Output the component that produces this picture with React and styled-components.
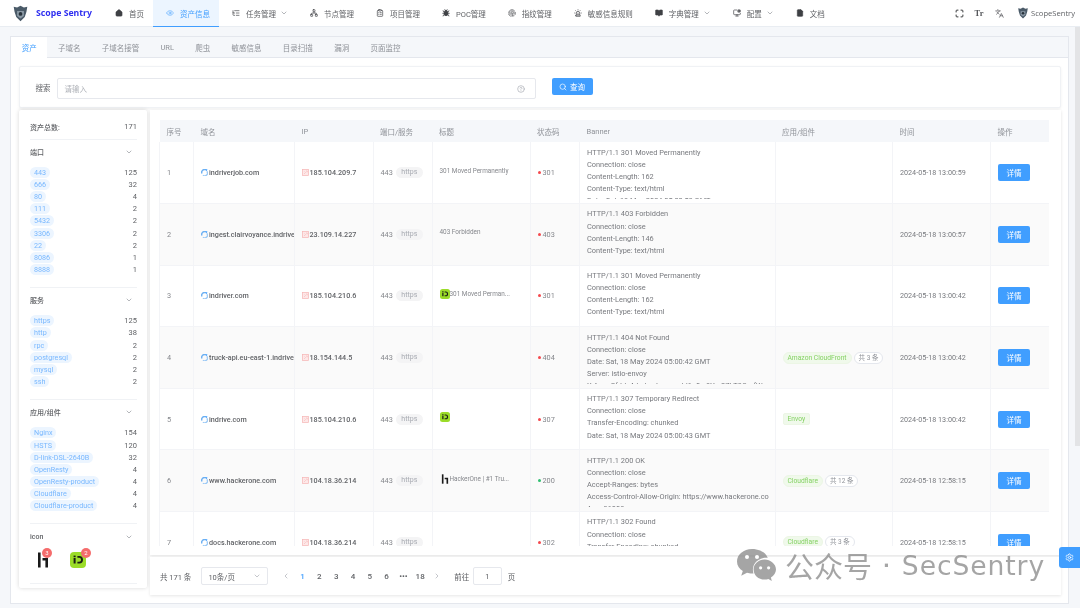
import React from "react";
import styled, { createGlobalStyle } from "styled-components";
import {
  Eye,
  ListTree,
  Network,
  ClipboardList,
  Bug,
  Fingerprint,
  Siren,
  BookOpen,
  MonitorCog,
  FileText,
  Maximize,
  Languages,
  ChevronDown,
  ChevronLeft,
  ChevronRight,
  Search,
  CircleHelp,
  Settings,
  Home,
} from "lucide-react";

const GlobalStyle = createGlobalStyle`
  html, body {
    margin: 0;
    padding: 0;
    height: 100%;
    overflow: hidden;
    background: #f5f7fa;
  }
  * {
    box-sizing: border-box;
  }
  #root {
    filter: blur(0.35px);
  }
`;

const FONT = `Roboto, "Noto Sans CJK SC", sans-serif`;

const Page = styled.div`
  position: relative;
  width: 1080px;
  height: 608px;
  overflow: hidden;
  font-family: ${FONT};
  font-size: 7.5px;
  color: #606266;
  background: #f5f7fa;
`;

const Header = styled.header`
  display: flex;
  align-items: stretch;
  height: 27px;
  background: #fff;
  border-bottom: 1px solid #e9edf2;
`;

const Brand = styled.div`
  display: flex;
  align-items: center;
  gap: 7px;
  width: 102px;
  padding-left: 12px;
  font-family: "Noto Sans", sans-serif;
  font-size: 8.7px;
  font-weight: 700;
  color: #2f2ff0;
  white-space: nowrap;
`;

const NavItem = styled.div`
  display: flex;
  align-items: center;
  height: 27px;
  padding: 0 9px 0 12px;
  gap: 5px;
  white-space: nowrap;
  color: ${(p) => (p.$active ? "#409eff" : "#606266")};
  background: ${(p) => (p.$active ? "#ecf5ff" : "transparent")};
  border-bottom: 1px solid ${(p) => (p.$active ? "#409eff" : "transparent")};
  svg.nav-icon {
    width: 10px;
    height: 10px;
    padding: 1px;
    color: ${(p) => (p.$active ? "#409eff" : "#3f4145")};
  }
  svg.chev {
    width: 8px;
    height: 8px;
    margin: 0 0 0 -1px;
    color: #909399;
  }
`;

const HeaderRight = styled.div`
  margin-left: auto;
  display: flex;
  align-items: center;
  padding-right: 5px;
  color: #303133;
  svg {
    display: block;
  }
`;

const ToolIcon = styled.span`
  display: flex;
  align-items: center;
  justify-content: center;
  width: 20px;
  margin-right: ${(p) => p.$mr || 0}px;
  font-family: "Liberation Serif", serif;
  font-size: 8.5px;
  font-weight: 700;
  color: #55575b;
`;

const UserName = styled.span`
  margin-left: 2px;
  font-family: "Open Sans", sans-serif;
  font-size: 7.6px;
  color: #606266;
`;

const Shell = styled.main`
  margin: 9px 11px 0 10px;
  height: 568px;
  background: #fff;
  border: 1px solid #e4e7ed;
`;

const TabBar = styled.div`
  display: flex;
  height: 21px;
  background: #f5f7fa;
  border-bottom: 1px solid #e4e7ed;
`;

const Tab = styled.div`
  display: flex;
  align-items: center;
  height: 21px;
  padding: 0 10.65px;
  color: ${(p) => (p.$active ? "#409eff" : "#909399")};
  background: ${(p) => (p.$active ? "#fff" : "transparent")};
`;

const Body = styled.div`
  padding: 8px 7px 0 8px;
`;

const SearchCard = styled.div`
  display: flex;
  align-items: flex-start;
  height: 42px;
  padding: 11px 0 0 15.5px;
  background: #fff;
  border: 1px solid #f0f2f5;
  border-radius: 2px;
  box-shadow: 0 1px 3px rgba(0, 0, 0, 0.06);
`;

const SearchLabel = styled.span`
  width: 21px;
  line-height: 21px;
  font-size: 7.5px;
`;

const SearchInput = styled.div`
  display: flex;
  align-items: center;
  justify-content: space-between;
  width: 479px;
  height: 21px;
  padding: 0 10px 0 7px;
  color: #b0b3b9;
  border: 1px solid #e6e8ed;
  border-radius: 2px;
  svg {
    width: 8px;
    height: 8px;
    color: #a8abb2;
  }
`;

const QueryButton = styled.div`
  display: flex;
  align-items: center;
  justify-content: center;
  gap: 3px;
  width: 41px;
  height: 17px;
  margin-left: 16px;
  color: #fff;
  background: #409eff;
  border-radius: 2px;
  svg {
    width: 8px;
    height: 8px;
  }
`;

const Columns = styled.div`
  display: flex;
  gap: 3px;
  margin-top: 2px;
`;

const Sidebar = styled.aside`
  width: 128px;
  height: 478px;
  padding: 0 10px 0 11px;
  background: #fff;
  box-shadow: 0 0 4px rgba(0, 0, 0, 0.16);
  border-radius: 2px;
`;

const SummaryRow = styled.div`
  display: flex;
  justify-content: space-between;
  align-items: center;
  height: 29.5px;
  padding-top: 5px;
  font-size: 7px;
  font-weight: 500;
  border-bottom: 1px solid #f0f2f5;
  b {
    font-weight: 400;
    font-size: 7.5px;
  }
`;

const FacetGroup = styled.section`
  padding-bottom: ${(p) => p.$pb ?? 11.5}px;
  border-bottom: 1px solid #f0f2f5;
`;

const FacetTitle = styled.div`
  display: flex;
  align-items: center;
  justify-content: space-between;
  height: 25px;
  margin-bottom: 2px;
  font-size: 7px;
  font-weight: 500;
  svg {
    width: 8px;
    height: 8px;
    margin-right: 4px;
    color: #909399;
  }
`;

const FacetRow = styled.div`
  display: flex;
  align-items: center;
  justify-content: space-between;
  height: 12.1px;
  font-size: 7.5px;
`;

const FacetTag = styled.span`
  display: inline-block;
  height: 11px;
  line-height: 11px;
  padding: 0 4px;
  font-size: 7.2px;
  color: #79b8ff;
  background: #ecf5ff;
  border-radius: 6px;
`;

const LogoRow = styled.div`
  display: flex;
  gap: 23px;
  height: 32px;
  padding: 1px 0 0 5px;
`;

const LogoWrap = styled.div`
  position: relative;
  width: ${(p) => p.$w}px;
  height: 16px;
`;

const Badge = styled.span`
  position: absolute;
  top: -4px;
  right: -5px;
  width: 10px;
  height: 10px;
  line-height: 10px;
  text-align: center;
  font-size: 6px;
  color: #fff;
  background: #f56c6c;
  border-radius: 50%;
`;

const MainColumn = styled.div`
  width: 911px;
`;

const TableCard = styled.div`
  height: 445px;
  padding: 10px 11px 9px 9px;
  background: #fff;
  box-shadow: 0 1px 3px rgba(0, 0, 0, 0.12);
`;

const TableClip = styled.div`
  height: 426px;
  overflow: hidden;
`;

const Table = styled.table`
  width: 890px;
  table-layout: fixed;
  border-collapse: collapse;
`;

const Th = styled.th`
  height: 22px;
  padding: 0 0 0 7px;
  text-align: left;
  font-size: 7.5px;
  font-weight: 400;
  color: #909399;
  background: #f5f7fa;
`;

const Row = styled.tr`
  height: 61.6px;
  background: ${(p) => (p.$striped ? "#fafafa" : "#fff")};
`;

const Td = styled.td`
  padding: 0 0 0 7px;
  border-right: 1px solid #f3f4f7;
  border-bottom: 1px solid #f3f4f7;
  overflow: hidden;
  white-space: nowrap;
  font-size: ${(p) => p.$size || 7.3}px;
  color: ${(p) => p.$color || "#85878c"};
  &:first-child {
    border-left: 1px solid #f3f4f7;
  }
  &:last-child {
    border-right: 0;
  }
`;

const Inline = styled.div`
  display: flex;
  align-items: center;
  gap: ${(p) => p.$gap || 0}px;
  white-space: nowrap;
  transform: translateY(${(p) => p.$up || 0}px);
`;

const Strong = styled.span`
  font-size: 7.2px;
  font-weight: 500;
  color: #606266;
`;

const PortTag = styled.span`
  height: 11px;
  line-height: 11px;
  padding: 0 5.5px;
  font-size: 7px;
  color: #a8abb2;
  background: #f4f4f5;
  border-radius: 6px;
`;

const Dot = styled.span`
  flex-shrink: 0;
  width: 3px;
  height: 3px;
  margin-right: 2px;
  border-radius: 50%;
  background: ${(p) => (p.$ok ? "#2fbf71" : "#f5484d")};
`;

const BannerBox = styled.div`
  width: 182px;
  height: 52px;
  overflow: hidden;
  font-size: 7.4px;
  line-height: 12.15px;
  color: #77797e;
`;

const AppTag = styled.span`
  height: 12px;
  line-height: 11px;
  padding: 0 4px;
  font-size: 6.7px;
  color: #85d264;
  background: #f0f9eb;
  border: 1px solid #ecf6e5;
  border-radius: ${(p) => (p.$square ? 2 : 6)}px;
`;

const CountTag = styled.span`
  height: 12px;
  line-height: 10px;
  padding: 0 4px;
  font-size: 6.5px;
  color: #909399;
  background: #fff;
  border: 1px solid #e4e7ed;
  border-radius: 6px;
`;

const DetailButton = styled.div`
  display: flex;
  align-items: center;
  justify-content: center;
  width: 32px;
  height: 17px;
  font-size: 7.5px;
  color: #fff;
  background: #409eff;
  border-radius: 2px;
`;

const Pagination = styled.div`
  display: flex;
  align-items: center;
  height: 38px;
  margin-top: 2px;
  padding-left: 10px;
  background: #fff;
  box-shadow: 0 1px 3px rgba(0, 0, 0, 0.1);
`;

const PageSelect = styled.div`
  display: flex;
  align-items: center;
  justify-content: space-between;
  width: 67px;
  height: 18px;
  margin-left: 10px;
  padding: 0 6px;
  border: 1px solid #e6e8ed;
  border-radius: 2px;
  svg {
    width: 8px;
    height: 8px;
    color: #a8abb2;
  }
`;

const Pager = styled.div`
  display: flex;
  align-items: center;
  margin-left: 9px;
  margin-right: 9px;
`;

const PageCell = styled.span`
  display: flex;
  align-items: center;
  justify-content: center;
  width: 16.8px;
  font-size: 8px;
  font-weight: 500;
  color: ${(p) => (p.$active ? "#409eff" : "#606266")};
  svg {
    width: 8px;
    height: 8px;
    color: #a8abb2;
  }
`;

const JumpInput = styled.span`
  display: flex;
  align-items: center;
  justify-content: center;
  width: 29px;
  height: 18px;
  margin: 0 6px 0 3.5px;
  border: 1px solid #e6e8ed;
  border-radius: 2px;
`;

const ScrollThumb = styled.div`
  position: absolute;
  top: 27px;
  right: 0;
  width: 5px;
  height: 419px;
  background: #e3e4e6;
`;

const FloatButton = styled.div`
  position: absolute;
  top: 547px;
  right: 0;
  display: flex;
  align-items: center;
  justify-content: center;
  width: 21px;
  height: 21px;
  color: #fff;
  background: #409eff;
  border-radius: 3px 0 0 3px;
  svg {
    width: 9px;
    height: 9px;
  }
`;

const Watermark = styled.div`
  position: absolute;
  top: 545px;
  left: 736px;
  display: flex;
  align-items: center;
  height: 40px;
  color: rgba(130, 130, 130, 0.72);
  font-family: "DejaVu Sans", "Noto Sans CJK SC", sans-serif;
  white-space: nowrap;
`;

const WatermarkCjk = styled.span`
  margin-left: 8px;
  font-family: "Noto Sans CJK SC", sans-serif;
  font-size: 29px;
`;

const WatermarkDot = styled.span`
  margin: 0 12px 0 11px;
  font-size: 18px;
  font-weight: 700;
`;

const WatermarkLatin = styled.span`
  font-size: 26.6px;
  letter-spacing: 0.9px;
`;

const NAV = [
  { label: "首页", Icon: Home, solid: true },
  { label: "资产信息", Icon: Eye, active: true },
  { label: "任务管理", Icon: ListTree, chevron: true },
  { label: "节点管理", Icon: Network },
  { label: "项目管理", Icon: ClipboardList },
  { label: "POC管理", Icon: Bug, solid: true },
  { label: "指纹管理", Icon: Fingerprint },
  { label: "敏感信息规则", Icon: Siren },
  { label: "字典管理", Icon: BookOpen, chevron: true, solid: true },
  { label: "配置", Icon: MonitorCog, chevron: true },
  { label: "文档", Icon: FileText, solid: true },
];

const TABS = ["资产", "子域名", "子域名接管", "URL", "爬虫", "敏感信息", "目录扫描", "漏洞", "页面监控"];

const FACETS = [
  {
    title: "端口",
    items: [["443", 125], ["666", 32], ["80", 4], ["111", 2], ["5432", 2], ["3306", 2], ["22", 2], ["8086", 1], ["8888", 1]],
  },
  {
    title: "服务",
    items: [["https", 125], ["http", 38], ["rpc", 2], ["postgresql", 2], ["mysql", 2], ["ssh", 2]],
  },
  {
    title: "应用/组件",
    items: [["Nginx", 154], ["HSTS", 120], ["D-link-DSL-2640B", 32], ["OpenResty", 4], ["OpenResty-product", 4], ["Cloudflare", 4], ["Cloudflare-product", 4]],
  },
];

const ROWS = [
  {
    domain: "indriverjob.com", ip: "185.104.209.7", title: "301 Moved Permanently", status: 301, time: "2024-05-18 13:00:59",
    banner: ["HTTP/1.1 301 Moved Permanently", "Connection: close", "Content-Length: 162", "Content-Type: text/html", "Date: Sat, 18 May 2024 05:00:59 GMT"],
  },
  {
    domain: "ingest.clairvoyance.indriver.com", ip: "23.109.14.227", title: "403 Forbidden", status: 403, time: "2024-05-18 13:00:57",
    banner: ["HTTP/1.1 403 Forbidden", "Connection: close", "Content-Length: 146", "Content-Type: text/html", "Date: Sat, 18 May 2024 05:00:58 GMT"],
  },
  {
    domain: "indriver.com", ip: "185.104.210.6", title: "301 Moved Perman...", logo: "id", status: 301, time: "2024-05-18 13:00:42",
    banner: ["HTTP/1.1 301 Moved Permanently", "Connection: close", "Content-Length: 162", "Content-Type: text/html", "Date: Sat, 18 May 2024 05:00:43 GMT"],
  },
  {
    domain: "truck-api.eu-east-1.indriver.com", ip: "18.154.144.5", title: "", status: 404, time: "2024-05-18 13:00:42", app: "Amazon CloudFront", count: "共 3 条",
    banner: ["HTTP/1.1 404 Not Found", "Connection: close", "Date: Sat, 18 May 2024 05:00:42 GMT", "Server: istio-envoy", "X-Amz-Cf-Id: 4dnJwpLpwqx-Jd1u0c-8Ym2ZkT3QmfWw"],
  },
  {
    domain: "indrive.com", ip: "185.104.210.6", title: "", logo: "id", status: 307, time: "2024-05-18 13:00:42", app: "Envoy", square: true,
    banner: ["HTTP/1.1 307 Temporary Redirect", "Connection: close", "Transfer-Encoding: chunked", "Date: Sat, 18 May 2024 05:00:43 GMT", "Location: /en/home"],
  },
  {
    domain: "www.hackerone.com", ip: "104.18.36.214", title: "HackerOne | #1 Tru...", logo: "h1", status: 200, time: "2024-05-18 12:58:15", app: "Cloudflare", count: "共 12 条",
    banner: ["HTTP/1.1 200 OK", "Connection: close", "Accept-Ranges: bytes", "Access-Control-Allow-Origin: https://www.hackerone.com", "Age: 91008"],
  },
  {
    domain: "docs.hackerone.com", ip: "104.18.36.214", title: "", status: 302, time: "2024-05-18 12:58:15", app: "Cloudflare", count: "共 3 条",
    banner: ["HTTP/1.1 302 Found", "Connection: close", "Transfer-Encoding: chunked", "Date: Sat, 18 May 2024 04:58:15 GMT"],
  },
];

const COLUMNS = [
  ["序号", 34], ["域名", 101], ["IP", 78.5], ["端口/服务", 59], ["标题", 98], ["状态码", 49.5],
  ["Banner", 195.5], ["应用/组件", 117.5], ["时间", 98], ["操作", 58.5],
];

const BrandMark = ({ size = 17 }) => (
  <svg width={size} height={size} viewBox="0 0 20 20">
    <path d="M10 1 L14 3 L18 2 L17 8 L15 14 L10 19 L5 14 L3 8 L2 2 L6 3 Z" fill="#4a5a68" />
    <path d="M6 7 L14 7 L14 13 L10 16 L6 13 Z" fill="#8b99a5" />
    <circle cx="10" cy="10.5" r="2.2" fill="#27323b" />
  </svg>
);

const IdLogo = ({ size = 16 }) => (
  <svg width={size} height={size} viewBox="0 0 16 16">
    <rect width="16" height="16" rx="4" fill="#9bdc28" />
    <rect x="3.6" y="6" width="2" height="5.5" fill="#1b1f14" />
    <rect x="3.6" y="3.6" width="2" height="1.6" fill="#1b1f14" />
    <path d="M7.4 4 H9.2 C11.8 4 13 5.6 13 7.8 C13 10 11.8 11.5 9.2 11.5 H7.4 V9.8 H9.1 C10.5 9.8 11 9 11 7.8 C11 6.6 10.5 5.7 9.1 5.7 H7.4 Z" fill="#1b1f14" />
  </svg>
);

const H1Logo = ({ size = 16 }) => (
  <svg width={size} height={size} viewBox="0 0 16 16">
    <rect x="3" y="0.5" width="2.6" height="15" fill="#1a1a1a" />
    <path d="M7.5 6 H13 V15.5 H10.4 V8.4 H7.5 Z" fill="#1a1a1a" />
  </svg>
);

const DomainIcon = () => (
  <svg width="7" height="7" viewBox="0 0 14 14" fill="none" style={{ marginRight: 1, flexShrink: 0 }}>
    <path d="M2 9 A5.5 5.5 0 0 1 10 2" stroke="#6db0f2" strokeWidth="2.8" />
    <path d="M12 5 A5.5 5.5 0 0 1 4 12.4" stroke="#9cc9f5" strokeWidth="2.8" />
    <path d="M9 0 L13 1 L11 5 Z" fill="#409eff" />
  </svg>
);

const IpIcon = () => (
  <svg width="7" height="7" viewBox="0 0 14 14" style={{ marginRight: 0.5, flexShrink: 0 }}>
    <rect x="0.8" y="0.8" width="12.4" height="12.4" fill="#fde8e8" stroke="#f6b5b5" strokeWidth="1.4" />
    <path d="M4 10 L7 7 L5 5 M8 4 H10.5 V6.5" stroke="#f6b5b5" strokeWidth="1.2" fill="none" />
  </svg>
);

const WeChatMark = () => (
  <svg width="41" height="34" viewBox="0 0 41 34">
    <path d="M16 1 C7.5 1 1 6.6 1 13.4 C1 17.5 3.3 20.8 6.8 23 L5.2 27.8 L11 24.8 C12.6 25.2 14 25.5 16 25.5 C16.5 25.5 17 25.5 17.5 25.4 C17.1 24.2 16.9 23 16.9 21.7 C16.9 15 23 9.8 30.6 9.8 C31 9.8 31.4 9.8 31.8 9.9 C30.2 4.8 23.7 1 16 1 Z" fill="rgba(130,130,130,.72)" />
    <circle cx="11" cy="9" r="2" fill="#fff" />
    <circle cx="21" cy="9" r="2" fill="#fff" />
    <path d="M40 21.5 C40 15.8 34.4 11.4 28.6 11.4 C22.4 11.4 17.6 15.8 17.6 21.5 C17.6 27.2 22.4 31.6 28.6 31.6 C29.9 31.6 31.2 31.3 32.4 31 L35.8 33 L34.9 29.6 C37.8 27.6 40 24.8 40 21.5 Z" fill="rgba(130,130,130,.72)" />
    <circle cx="24.6" cy="19.8" r="1.6" fill="#fff" />
    <circle cx="32.6" cy="19.8" r="1.6" fill="#fff" />
  </svg>
);

const TitleLogo = ({ kind }) => {
  if (kind === "id") return <IdLogo size={10} />;
  if (kind === "h1") return <H1Logo size={10} />;
  return null;
};

const App = () => {
  return (
    <Page>
      <GlobalStyle />
      <Header>
        <Brand>
          <BrandMark />
          <span>Scope Sentry</span>
        </Brand>
        {NAV.map(({ label, Icon, active, chevron, solid }) => (
          <NavItem key={label} $active={active}>
            <Icon className="nav-icon" strokeWidth={active ? 1.6 : 2} fill={solid ? "currentColor" : "none"} />
            <span>{label}</span>
            {chevron && <ChevronDown className="chev" />}
          </NavItem>
        ))}
        <HeaderRight>
          <ToolIcon>
            <Maximize size={9} strokeWidth={2.6} color="#303133" />
          </ToolIcon>
          <ToolIcon>Tr</ToolIcon>
          <ToolIcon $mr={8}>
            <Languages size={9} color="#606266" />
          </ToolIcon>
          <BrandMark size={12} />
          <UserName>ScopeSentry</UserName>
        </HeaderRight>
      </Header>
      <Shell>
        <TabBar>
          {TABS.map((tab, i) => (
            <Tab key={tab} $active={i === 0}>
              {tab}
            </Tab>
          ))}
        </TabBar>
        <Body>
          <SearchCard>
            <SearchLabel>搜索</SearchLabel>
            <SearchInput>
              <span>请输入</span>
              <CircleHelp />
            </SearchInput>
            <QueryButton>
              <Search />
              <span>查询</span>
            </QueryButton>
          </SearchCard>
          <Columns>
            <Sidebar>
              <SummaryRow>
                <span>资产总数:</span>
                <b>171</b>
              </SummaryRow>
              {FACETS.map(({ title, items }) => (
                <FacetGroup key={title}>
                  <FacetTitle>
                    <span>{title}</span>
                    <ChevronDown />
                  </FacetTitle>
                  {items.map(([name, count]) => (
                    <FacetRow key={name}>
                      <FacetTag>{name}</FacetTag>
                      <span>{count}</span>
                    </FacetRow>
                  ))}
                </FacetGroup>
              ))}
              <FacetGroup $pb={0}>
                <FacetTitle>
                  <span>icon</span>
                  <ChevronDown />
                </FacetTitle>
                <LogoRow>
                  <LogoWrap $w={12}>
                    <H1Logo />
                    <Badge>3</Badge>
                  </LogoWrap>
                  <LogoWrap $w={16}>
                    <IdLogo />
                    <Badge>2</Badge>
                  </LogoWrap>
                </LogoRow>
              </FacetGroup>
            </Sidebar>
            <MainColumn>
              <TableCard>
                <TableClip>
                  <Table>
                    <colgroup>
                      {COLUMNS.map(([name, w]) => (
                        <col key={name} style={{ width: w }} />
                      ))}
                    </colgroup>
                    <thead>
                      <tr>
                        {COLUMNS.map(([name]) => (
                          <Th key={name}>{name}</Th>
                        ))}
                      </tr>
                    </thead>
                    <tbody>
                      {ROWS.map((row, i) => (
                        <Row key={row.domain} $striped={i % 2 === 1}>
                          <Td>{i + 1}</Td>
                          <Td>
                            <Inline>
                              <DomainIcon />
                              <Strong>{row.domain}</Strong>
                            </Inline>
                          </Td>
                          <Td>
                            <Inline>
                              <IpIcon />
                              <Strong>{row.ip}</Strong>
                            </Inline>
                          </Td>
                          <Td>
                            <Inline $gap={3}>
                              <span>443</span>
                              <PortTag>https</PortTag>
                            </Inline>
                          </Td>
                          <Td $size={6.4}>
                            <Inline $up={-2}>
                              <TitleLogo kind={row.logo} />
                              <span>{row.title}</span>
                            </Inline>
                          </Td>
                          <Td>
                            <Inline>
                              <Dot $ok={row.status === 200} />
                              <span>{row.status}</span>
                            </Inline>
                          </Td>
                          <Td>
                            <BannerBox>
                              {row.banner.map((line) => (
                                <div key={line}>{line}</div>
                              ))}
                            </BannerBox>
                          </Td>
                          <Td>
                            {row.app && (
                              <Inline $gap={2}>
                                <AppTag $square={row.square}>{row.app}</AppTag>
                                {row.count && <CountTag>{row.count}</CountTag>}
                              </Inline>
                            )}
                          </Td>
                          <Td $size={7.2} $color="#77797e">
                            {row.time}
                          </Td>
                          <Td>
                            <DetailButton>详情</DetailButton>
                          </Td>
                        </Row>
                      ))}
                    </tbody>
                  </Table>
                </TableClip>
              </TableCard>
              <Pagination>
                <span>共 171 条</span>
                <PageSelect>
                  <span>10条/页</span>
                  <ChevronDown />
                </PageSelect>
                <Pager>
                  <PageCell>
                    <ChevronLeft />
                  </PageCell>
                  <PageCell $active>1</PageCell>
                  <PageCell>2</PageCell>
                  <PageCell>3</PageCell>
                  <PageCell>4</PageCell>
                  <PageCell>5</PageCell>
                  <PageCell>6</PageCell>
                  <PageCell>•••</PageCell>
                  <PageCell>18</PageCell>
                  <PageCell>
                    <ChevronRight />
                  </PageCell>
                </Pager>
                <span>前往</span>
                <JumpInput>1</JumpInput>
                <span>页</span>
              </Pagination>
            </MainColumn>
          </Columns>
        </Body>
      </Shell>
      <ScrollThumb />
      <Watermark>
        <WeChatMark />
        <WatermarkCjk>公众号</WatermarkCjk>
        <WatermarkDot>·</WatermarkDot>
        <WatermarkLatin>SecSentry</WatermarkLatin>
      </Watermark>
      <FloatButton>
        <Settings />
      </FloatButton>
    </Page>
  );
};

export default App;
